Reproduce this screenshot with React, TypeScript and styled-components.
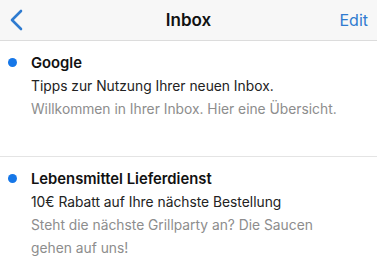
import React from 'react';
import styled, { createGlobalStyle } from 'styled-components';

const GlobalStyle = createGlobalStyle`
  body {
    margin: 0;
    background: #ffffff;
    font-family: "Inter", "Open Sans", sans-serif;
  }
`;

interface Message {
  sender: string;
  subject: string;
  preview: string;
}

const messages: Message[] = [
  {
    sender: 'Google',
    subject: 'Tipps zur Nutzung Ihrer neuen Inbox.',
    preview: 'Willkommen in Ihrer Inbox. Hier eine Übersicht.',
  },
  {
    sender: 'Lebensmittel Lieferdienst',
    subject: '10€ Rabatt auf Ihre nächste Bestellung',
    preview: 'Steht die nächste Grillparty an? Die Saucen gehen auf uns!',
  },
];

const App: React.FC = () => {
  return (
    <Screen>
      <GlobalStyle />
      <NavBar>
        <BackButton aria-label="Zurück">
          <svg viewBox="0 0 14 22" width="14" height="22">
            <path d="M12 2 L3 11 L12 20" fill="none" stroke="#2f7bd0" strokeWidth="2.6" strokeLinecap="round" strokeLinejoin="round" />
          </svg>
        </BackButton>
        <Title>Inbox</Title>
        <EditButton>Edit</EditButton>
      </NavBar>
      <List>
        {messages.map((m) => (
          <Item key={m.sender}>
            <Dot />
            <Body>
              <Sender>{m.sender}</Sender>
              <Subject>{m.subject}</Subject>
              <Preview>{m.preview}</Preview>
            </Body>
          </Item>
        ))}
      </List>
    </Screen>
  );
};

const Screen = styled.div`
  width: 377px;
  height: 275px;
  overflow: hidden;
`;

const NavBar = styled.header`
  height: 40px;
  display: grid;
  grid-template-columns: 1fr auto 1fr;
  align-items: center;
  padding: 0 9px;
  background: #f7f7f7;
  border-bottom: 1px solid #dcdcdc;
`;

const BackButton = styled.button`
  justify-self: start;
  display: flex;
  align-items: center;
  background: none;
  border: none;
  padding: 0;
`;

const Title = styled.h1`
  margin: 0;
  font-size: 17px;
  font-weight: 600;
  color: #111;
`;

const EditButton = styled.button`
  justify-self: end;
  background: none;
  border: none;
  padding: 0;
  font-family: inherit;
  font-size: 16px;
  color: #2f7bd0;
`;

const List = styled.ul`
  list-style: none;
  margin: 0;
  padding: 0;
`;

const Item = styled.li`
  display: flex;
  align-items: flex-start;
  padding: 11px 36px 16px 8px;
  min-height: 116px;
  box-sizing: border-box;
  border-bottom: 1px solid #e4e4e4;
`;

const Dot = styled.span`
  flex: none;
  width: 9px;
  height: 9px;
  margin: 6px 14px 0 0;
  border-radius: 50%;
  background: #1677e8;
`;

const Body = styled.div`
  display: flex;
  flex-direction: column;
  font-size: 13.8px;
  line-height: 23px;
`;

const Sender = styled.div`
  font-size: 14.8px;
  font-weight: 600;
  color: #111;
`;

const Subject = styled.div`
  color: #222;
`;

const Preview = styled.div`
  color: #8d8d8d;
`;

export default App;
